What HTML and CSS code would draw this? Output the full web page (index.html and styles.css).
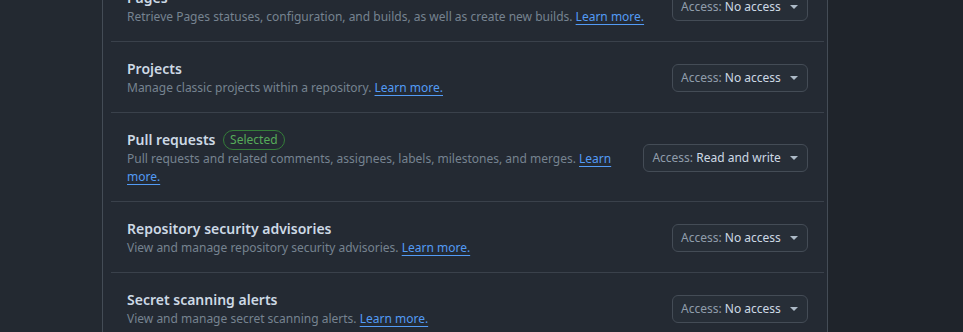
FILE: index.html
```html
<!DOCTYPE html>
<html lang="en">
<head>
    <title>Repository permissions</title>
    <link rel="stylesheet" href="styles.css">
</head>
<body>
    <div class="layout">
        <div class="side"></div>

        <div class="panel">
            <ul class="perm-list">
                <li class="perm">
                    <div class="perm-info">
                        <h3>Pages</h3>
                        <p>Retrieve Pages statuses, configuration, and builds, as well as create new builds. <a href="#">Learn more.</a></p>
                    </div>
                    <button class="access-btn"><span class="muted">Access:</span> No access <span class="caret"></span></button>
                </li>
                <li class="perm">
                    <div class="perm-info">
                        <h3>Projects</h3>
                        <p>Manage classic projects within a repository. <a href="#">Learn more.</a></p>
                    </div>
                    <button class="access-btn"><span class="muted">Access:</span> No access <span class="caret"></span></button>
                </li>
                <li class="perm">
                    <div class="perm-info">
                        <h3>Pull requests <span class="label">Selected</span></h3>
                        <p>Pull requests and related comments, assignees, labels, milestones, and merges. <a href="#">Learn more.</a></p>
                    </div>
                    <button class="access-btn"><span class="muted">Access:</span> Read and write <span class="caret"></span></button>
                </li>
                <li class="perm">
                    <div class="perm-info">
                        <h3>Repository security advisories</h3>
                        <p>View and manage repository security advisories. <a href="#">Learn more.</a></p>
                    </div>
                    <button class="access-btn"><span class="muted">Access:</span> No access <span class="caret"></span></button>
                </li>
                <li class="perm">
                    <div class="perm-info">
                        <h3>Secret scanning alerts</h3>
                        <p>View and manage secret scanning alerts. <a href="#">Learn more.</a></p>
                    </div>
                    <button class="access-btn"><span class="muted">Access:</span> No access <span class="caret"></span></button>
                </li>
            </ul>
        </div>

        <div class="rest"></div>
    </div>
</body>
</html>
```

FILE: styles.css
```css
body {
    margin: 0;
    padding: 0;
    background-color: #1f242b;
    font-family: "Noto Sans", "Liberation Sans", sans-serif;
    color: #adbac7;
    overflow: hidden;
}

.layout {
    display: flex;
    height: 332px;
}

.side {
    width: 102px;
    background-color: #232931;
}

.panel {
    width: 713px;
    padding: 0 3px 0 8px;
    background-color: #242a33;
    border-left: 1px solid #444c56;
    border-right: 1px solid #444c56;
}

.rest {
    flex: 1;
    background-color: #1f242b;
}

.perm-list {
    list-style: none;
    margin: -29px 0 0 0;
    padding: 0;
}

.perm {
    display: flex;
    align-items: center;
    gap: 16px;
    padding: 16px 16px 15px 16px;
    border-bottom: 1px solid #3a414b;
}

.perm-info {
    flex: 1;
}

.perm-info h3 {
    margin: 0;
    font-size: 14px;
    font-weight: 600;
    line-height: 21px;
    color: #cdd9e5;
}

.perm-info p {
    margin: 0;
    font-size: 12px;
    line-height: 18px;
    color: #768390;
}

.perm-info a {
    color: #539bf5;
    text-decoration: underline;
    text-underline-offset: 3px;
}

.label {
    display: inline-block;
    margin-left: 4px;
    padding: 0 6px;
    font-size: 12px;
    font-weight: 400;
    line-height: 18px;
    color: #57ab5a;
    border: 1px solid #347d39;
    border-radius: 2em;
    vertical-align: 1px;
}

.access-btn {
    display: flex;
    align-items: center;
    height: 28px;
    padding: 0 7px 0 8px;
    font-family: inherit;
    font-size: 12px;
    font-weight: 400;
    color: #cdd9e5;
    background-color: #272e37;
    border: 1px solid #444c56;
    border-radius: 6px;
    white-space: pre;
    cursor: pointer;
}

.access-btn .muted {
    color: #909dab;
}

.caret {
    display: inline-block;
    width: 0;
    height: 0;
    margin-left: 6px;
    margin-right: 2px;
    border-left: 4px solid transparent;
    border-right: 4px solid transparent;
    border-top: 4px solid #adbac7;
}
```
